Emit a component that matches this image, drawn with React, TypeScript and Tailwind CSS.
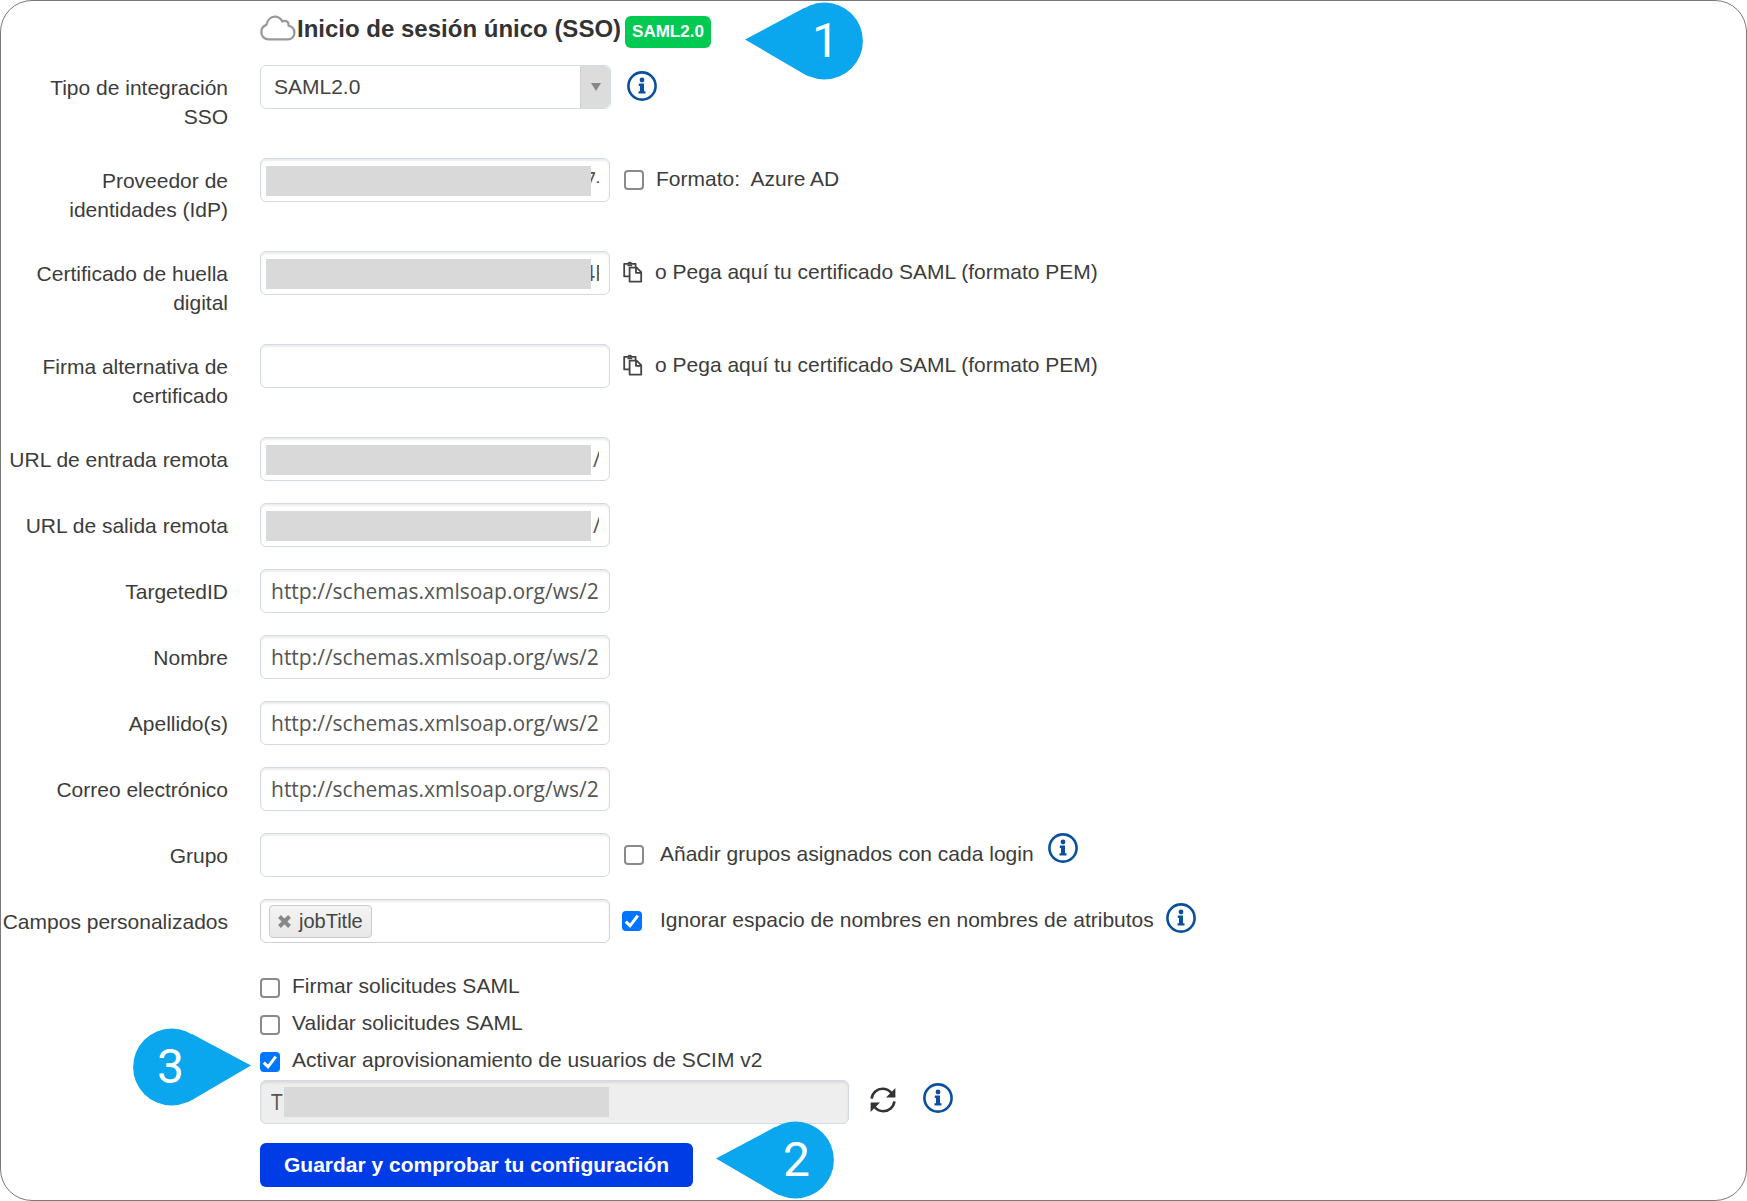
import type { ReactNode } from "react";

const fieldClass =
  "h-11 w-[350px] rounded-md border border-[#d3dbe0] bg-white px-[10px] font-['Open_Sans',sans-serif] text-[21px] text-[#555] shadow-[inset_0_2px_2px_rgba(0,0,0,0.08)] outline-none";

const schemaUrl = "http://schemas.xmlsoap.org/ws/2005/05/identity/claims";

function InfoButton({ className = "" }: { className?: string }) {
  return (
    <button type="button" aria-label="Información" className={`shrink-0 ${className}`}>
      <svg width="30" height="30" viewBox="0 0 30 30" className="block">
        <circle cx="15" cy="15" r="13.6" fill="none" stroke="#0a509f" strokeWidth="2.6" />
        <circle cx="15" cy="9" r="2.4" fill="#0a509f" />
        <path d="M11.8 12.6h5.2v7.6h1.5v2.3h-7v-2.3h1.5v-5.3h-1.2z" fill="#0a509f" />
      </svg>
    </button>
  );
}

function PasteIcon() {
  return (
    <svg width="20" height="22" viewBox="0 0 20 22" fill="none" stroke="#444" strokeWidth="1.8" strokeLinejoin="round" className="shrink-0">
      <path d="M6.6 15.4H1.2V2.8h11.4v3.8" />
      <path d="M4.4 4.6h4.8M5.2 2.4c.5-1.3 2.700-1.3 3.200 0" strokeWidth="1.5" />
      <path d="M6.6 6.6h7l4.600 4.600v9.400H6.600z" />
      <path d="M13 6.800v5h5" />
    </svg>
  );
}

function RefreshIcon() {
  return (
    <svg width="28" height="28" viewBox="0 0 28 28" className="block">
      <path d="M2.6 12.6C3.4 6.6 8 2.8 13.6 2.8c3.6 0 6.7 1.5 8.9 4.4" fill="none" stroke="#333" strokeWidth="2.6" />
      <path d="M25.4 15.4C24.6 21.4 20 25.2 14.4 25.2c-3.6 0-6.7-1.5-8.9-4.4" fill="none" stroke="#333" strokeWidth="2.6" />
      <path d="M26.4 2v9.4H17z" fill="#333" />
      <path d="M1.6 26v-9.4H11z" fill="#333" />
    </svg>
  );
}

function CloudIcon() {
  return (
    <svg width="36" height="26" viewBox="0 0 36 26" fill="none" stroke="#999" strokeWidth="2.3" strokeLinejoin="round" className="mr-px mb-[9px] shrink-0">
      <path d="M9 24.4C4.5 24.4 1.3 21.2 1.3 17.2c0-3.4 2-6.2 5.1-7.3C7.4 5 10.7 1.7 14.7 1.7c3.3 0 6.2 1.9 7.7 4.9 1-.6 1.9-.8 2.9-.7 2.3.4 3.5 2.4 3.2 4.8 3.5.9 5.9 3.6 5.9 7 0 3.9-2.9 6.700-6.4 6.700z" />
    </svg>
  );
}

function Pin({ label, point, className }: { label: string; point: "left" | "right"; className: string }) {
  return (
    <div className={`absolute flex h-[78px] w-[118px] items-center ${point === "left" ? "justify-end pr-6" : "pl-6"} ${className}`}>
      <svg viewBox="0 0 118 78" fill="#0aa6ee" className={`absolute inset-0 size-full ${point === "right" ? "-scale-x-100" : ""}`}>
        <circle cx="79.4" cy="39" r="38.5" />
        <path d="M0 37.5 59.5 5.8 64 74.5 59 72z" />
      </svg>
      <span className="relative font-[Roboto,sans-serif] text-[48px] leading-none text-white">{label}</span>
    </div>
  );
}

type RowProps = { id: string; label: string; children: ReactNode };

function Row({ id, label, children }: RowProps) {
  return (
    <div className="mb-[22px] flex items-start">
      <label htmlFor={id} className="mr-8 w-[227px] shrink-0 pt-2 pb-[5px] text-right leading-[29px] whitespace-pre-line">
        {label}
      </label>
      <div className="flex h-11 items-center">{children}</div>
    </div>
  );
}

/* Text box whose value is hidden behind a grey block */
function MaskedField({ id, tail, className }: { id: string; tail: string; className: string }) {
  return (
    <div className="relative">
      <input id={id} type="text" defaultValue={tail} className={`${fieldClass} ${className}`} />
      <span className="absolute top-2 left-[6px] h-[30px] w-[325px] bg-[#d9d9d9]" />
    </div>
  );
}

function Check({ label, checked, className }: { label: string; checked?: boolean; className: string }) {
  return (
    <label className={`flex items-center ${className}`}>
      <span className="relative shrink-0">
        <input
          type="checkbox"
          defaultChecked={checked}
          className="peer m-0 block size-5 appearance-none rounded-[4px] border-2 border-[#8a8a8a] bg-white checked:border-[#0075ff] checked:bg-[#0075ff]"
        />
        <svg
          viewBox="0 0 20 20"
          fill="none"
          stroke="#fff"
          strokeWidth="3"
          className="pointer-events-none absolute inset-0 hidden size-full peer-checked:block"
        >
          <path d="M3.8 10.6 8 14.8 15.8 4.6" />
        </svg>
      </span>
      <span className="pb-[3px] whitespace-pre">{label}</span>
    </label>
  );
}

function PasteLink() {
  return (
    <a href="#pem" className="ml-[13px] flex items-center gap-3 pb-[3px]">
      <PasteIcon />
      <span>o Pega aquí tu certificado SAML (formato PEM)</span>
    </a>
  );
}

export default function App() {
  return (
    <form className="relative min-h-screen overflow-hidden rounded-[32px] border border-[#7a7a7a] bg-white pb-3 font-['Liberation_Sans',Arial,sans-serif] text-[21px] text-[#3c3c3c]">
      <div className="mt-[15px] mb-[17px] ml-[259px] flex h-8 items-center">
        <CloudIcon />
        <h1 className="mb-[6px] text-[24px] leading-none font-bold text-[#333]">Inicio de sesión único (SSO)</h1>
        <span className="ml-1 flex h-8 items-center rounded-md bg-[#02c951] px-[7px] pb-px text-[17px] font-bold text-white">
          SAML2.0
        </span>
      </div>

      <Row id="tipo" label={"Tipo de integración\nSSO"}>
        <div className="relative">
          <select
            id="tipo"
            className="block h-11 w-[351px] appearance-none rounded-md border border-[#d3dbe0] bg-white px-[13px] text-[21px] text-[#444] outline-none"
          >
            <option>SAML2.0</option>
          </select>
          <span className="pointer-events-none absolute inset-y-px right-px flex w-[30px] items-center justify-center rounded-r-md border-l border-[#d0d0d0] bg-[#dcdcdc]">
            <svg width="10" height="8" viewBox="0 0 10 8" fill="#888">
              <path d="M0 0h10L5 8z" />
            </svg>
          </span>
        </div>
        <InfoButton className="mb-[2px] ml-4" />
      </Row>

      <Row id="idp" label={"Proveedor de\nidentidades (IdP)"}>
        <MaskedField id="idp" tail="7-" className="pl-[323px]" />
        <Check label="Formato:  Azure AD" className="ml-[14px] gap-3" />
      </Row>

      <Row id="huella" label={"Certificado de huella\ndigital"}>
        <MaskedField id="huella" tail="4F" className="pl-[322px]" />
        <PasteLink />
      </Row>

      <Row id="firma" label={"Firma alternativa de\ncertificado"}>
        <input id="firma" type="text" className={fieldClass} />
        <PasteLink />
      </Row>

      <Row id="entrada" label="URL de entrada remota">
        <MaskedField id="entrada" tail="/" className="pl-[332px]" />
      </Row>
      <Row id="salida" label="URL de salida remota">
        <MaskedField id="salida" tail="/" className="pl-[332px]" />
      </Row>

      <Row id="targeted" label="TargetedID">
        <input id="targeted" type="text" defaultValue={schemaUrl} className={fieldClass} />
      </Row>
      <Row id="nombre" label="Nombre">
        <input id="nombre" type="text" defaultValue={schemaUrl} className={fieldClass} />
      </Row>
      <Row id="apellido" label="Apellido(s)">
        <input id="apellido" type="text" defaultValue={schemaUrl} className={fieldClass} />
      </Row>
      <Row id="correo" label="Correo electrónico">
        <input id="correo" type="text" defaultValue={schemaUrl} className={fieldClass} />
      </Row>

      <Row id="grupo" label="Grupo">
        <input id="grupo" type="text" className={fieldClass} />
        <Check label="Añadir grupos asignados con cada login" className="mr-[14px] ml-[14px] gap-4" />
        <InfoButton className="mb-[14px]" />
      </Row>

      <Row id="campos" label="Campos personalizados">
        <div className="flex h-11 w-[350px] items-center gap-1 rounded-md border border-[#d0d3d5] px-2 shadow-[inset_0_2px_2px_rgba(0,0,0,0.08)]">
          <span className="flex h-[33px] shrink-0 items-center gap-2 rounded border border-[#ccc] bg-linear-to-b from-[#f4f4f4] to-[#e8e8e8] px-2 text-[20px] text-[#444]">
            <button type="button" aria-label="Quitar jobTitle">
              <svg width="13" height="13" viewBox="0 0 13 13" stroke="#888" strokeWidth="4" className="block">
                <path d="M1.5 1.5l10 10M11.5 1.5l-10 10" />
              </svg>
            </button>
            jobTitle
          </span>
          <input id="campos" type="text" className="min-w-0 flex-1 outline-none" />
        </div>
        <Check label="Ignorar espacio de nombres en nombres de atributos" checked className="mr-3 ml-3 gap-[18px]" />
        <InfoButton className="mb-[6px]" />
      </Row>

      <div className="ml-[259px] flex flex-col items-start pt-1">
        <Check label="Firmar solicitudes SAML" className="h-[37px] gap-3" />
        <Check label="Validar solicitudes SAML" className="h-[37px] gap-3" />
        <Check label="Activar aprovisionamiento de usuarios de SCIM v2" checked className="h-[37px] gap-3" />
        <div className="mb-[19px] flex items-center">
          <div className="relative">
            <input
              type="text"
              aria-label="Token de SCIM"
              readOnly
              defaultValue="T"
              className="block h-11 w-[589px] rounded-md border border-[#d3dbe0] bg-[#eee] px-[10px] font-['Open_Sans',sans-serif] text-[21px] text-[#555] shadow-[inset_0_2px_2px_rgba(0,0,0,0.08)] outline-none"
            />
            <span className="absolute top-[7px] left-6 h-[30px] w-[325px] bg-[#d9d9d9]" />
          </div>
          <button type="button" aria-label="Regenerar" className="mr-[26px] mb-1 ml-5">
            <RefreshIcon />
          </button>
          <InfoButton className="mb-2" />
        </div>
        <button type="submit" className="h-11 rounded-md bg-[#003ce6] px-6 text-[21px] font-bold text-white">
          Guardar y comprobar tu configuración
        </button>
      </div>

      <Pin label="1" point="left" className="top-px left-[744px]" />
      <Pin label="3" point="right" className="top-[1027px] left-[132px]" />
      <Pin label="2" point="left" className="top-[1120px] left-[715px]" />
    </form>
  );
}
